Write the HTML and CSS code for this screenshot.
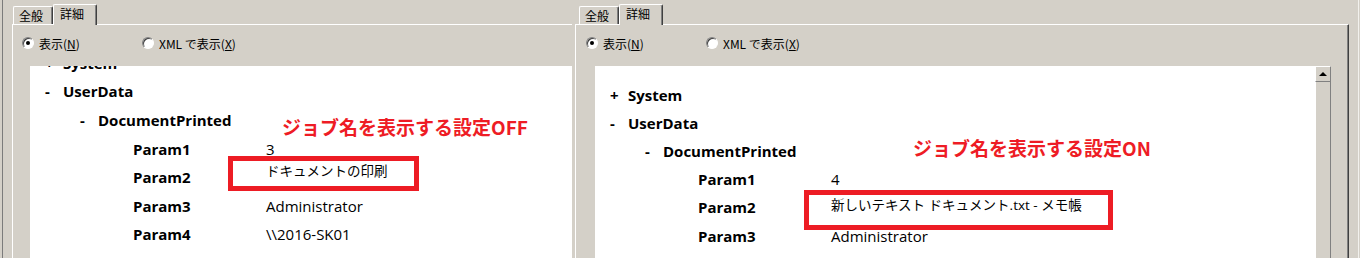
FILE: index.html
```html
<!DOCTYPE html>
<html lang="ja">
<head>
<meta charset="utf-8">
<title>イベントのプロパティ</title>
<link rel="stylesheet" href="styles.css">
</head>
<body>
<div class="screen">
  <section class="shot shot-left">
    <div class="frame">
      <div class="tabs">
        <div class="tab">全般</div>
        <div class="tab tab-active">詳細</div>
      </div>
      <div class="panel">
        <div class="radios">
          <div class="option"><span class="radio checked"></span><span>表示(<u>N</u>)</span></div>
          <div class="option"><span class="radio"></span><span>XML で表示(<u>X</u>)</span></div>
        </div>
        <div class="pane">
          <div class="tree tree-scrolled">
            <div class="row lv1"><span class="toggle">+</span><span class="name">System</span></div>
            <div class="row lv1"><span class="toggle">-</span><span class="name">UserData</span></div>
            <div class="row lv2"><span class="toggle">-</span><span class="name">DocumentPrinted</span></div>
            <div class="row lv3"><span class="name">Param1</span><span class="value">3</span></div>
            <div class="row lv3"><span class="name">Param2</span><span class="value ja ja-high">ドキュメントの印刷</span></div>
            <div class="row lv3"><span class="name">Param3</span><span class="value">Administrator</span></div>
            <div class="row lv3"><span class="name">Param4</span><span class="value">\\2016-SK01</span></div>
          </div>
        </div>
      </div>
    </div>
  </section>
  <section class="shot shot-right">
    <div class="frame">
      <div class="tabs">
        <div class="tab">全般</div>
        <div class="tab tab-active">詳細</div>
      </div>
      <div class="panel">
        <div class="radios">
          <div class="option"><span class="radio checked"></span><span>表示(<u>N</u>)</span></div>
          <div class="option"><span class="radio"></span><span>XML で表示(<u>X</u>)</span></div>
        </div>
        <div class="pane">
          <div class="tree-area">
            <div class="tree tree-top">
              <div class="row lv1"><span class="toggle">+</span><span class="name">System</span></div>
              <div class="row lv1"><span class="toggle">-</span><span class="name">UserData</span></div>
              <div class="row lv2"><span class="toggle">-</span><span class="name">DocumentPrinted</span></div>
              <div class="row lv3"><span class="name">Param1</span><span class="value">4</span></div>
              <div class="row lv3"><span class="name">Param2</span><span class="value ja">新しいテキスト ドキュメント.txt - メモ帳</span></div>
              <div class="row lv3"><span class="name">Param3</span><span class="value">Administrator</span></div>
            </div>
          </div>
          <div class="scrollbar">
            <div class="sb-btn"><span class="sb-arrow"></span></div>
            <div class="sb-thumb"></div>
          </div>
        </div>
      </div>
    </div>
    <div class="window-edge"></div>
  </section>

  <div class="note note-off">ジョブ名を表示する設定OFF</div>
  <div class="mark mark-off"></div>
  <div class="note note-on">ジョブ名を表示する設定ON</div>
  <div class="mark mark-on"></div>
</div>
</body>
</html>
```

FILE: styles.css
```css
html, body {
  margin: 0;
  padding: 0;
}
body {
  width: 1360px;
  height: 258px;
  overflow: hidden;
  background: #d4d0c8;
  font-family: "Noto Sans CJK JP", "Liberation Sans", sans-serif;
  color: #000;
}
.screen {
  position: relative;
  display: flex;
  height: 258px;
}
.shot {
  flex: none;
  height: 258px;
  display: flex;
  box-sizing: border-box;
  overflow: hidden;
}
.shot-left {
  width: 572px;
  padding-left: 2px;
}
.shot-left .frame {
  flex: 1;
  min-width: 0;
  border-left: 1px solid #7b7b7b;
  padding-left: 9px;
  display: flex;
  flex-direction: column;
}
.shot-right {
  width: 788px;
  padding-left: 3px;
  padding-right: 1px;
}
.shot-right .frame {
  flex: none;
  width: 774px;
  display: flex;
  flex-direction: column;
}
.window-edge {
  flex: none;
  width: 10px;
  box-sizing: border-box;
  border-right: 1px solid #f2f1ed;
}

/* tabs */
.tabs {
  flex: none;
  height: 24px;
  display: flex;
  align-items: flex-end;
  padding-left: 1px;
}
.shot-right .tabs {
  padding-left: 4px;
}
.tab {
  position: relative;
  height: 18px;
  width: 40px;
  box-sizing: border-box;
  border-top: 1px solid #fff;
  border-left: 1px solid #fff;
  border-right: 1px solid #404040;
  border-radius: 2px 2px 0 0;
  box-shadow: inset -1px 0 0 #808080;
  font-size: 12px;
  line-height: 17px;
  padding-left: 5px;
  white-space: nowrap;
}
.tab-active {
  z-index: 1;
  height: 21px;
  width: 44px;
  margin-bottom: -1px;
  background: #d4d0c8;
  padding-left: 6px;
  line-height: 18px;
}

/* panel */
.panel {
  flex: 1;
  min-height: 0;
  display: flex;
  flex-direction: column;
  border-top: 1px solid #fff;
  border-left: 1px solid #fff;
}
.shot-right .panel {
  border-right: 1px solid #404040;
  box-shadow: inset -1px 0 0 #808080;
}
.radios {
  flex: none;
  height: 41px;
  box-sizing: border-box;
  padding-bottom: 5px;
  display: flex;
  align-items: center;
  padding-left: 9px;
  font-size: 12px;
}
.shot-right .radios {
  padding-left: 10px;
}
.option {
  width: 120px;
  display: flex;
  align-items: center;
  gap: 5px;
  white-space: nowrap;
}
.option u {
  text-decoration-thickness: 1px;
  text-underline-offset: 1px;
}
.radio {
  position: relative;
  flex: none;
  width: 12px;
  height: 12px;
  box-sizing: border-box;
  border-radius: 50%;
  background: #fff;
  border: 1px solid;
  border-color: #808080 #ffffff #ffffff #808080;
  box-shadow: inset 1px 1px 0 #404040;
}
.radio.checked::after {
  content: "";
  position: absolute;
  left: 3px;
  top: 3px;
  width: 4px;
  height: 4px;
  border-radius: 50%;
  background: #000;
}

.pane {
  flex: 1;
  min-height: 0;
  background: #fff;
  margin-left: 17px;
  overflow: hidden;
}
.shot-right .pane {
  margin-left: 19px;
  margin-right: 17px;
  display: flex;
}
.tree-area {
  flex: 1;
  min-width: 0;
  overflow: hidden;
}

/* tree */
.tree {
  font-family: "Open Sans", "Liberation Sans", sans-serif;
  font-size: 15px;
}
.tree-scrolled {
  margin-top: -17.5px;
}
.tree-scrolled .row {
  height: 28.6px;
}
.tree-top {
  padding-top: 14.5px;
}
.tree-top .row {
  height: 28.2px;
}
.row {
  display: flex;
  align-items: center;
  white-space: nowrap;
}
.lv1 { padding-left: 15px; }
.lv2 { padding-left: 50px; }
.lv3 { padding-left: 103px; }
.toggle {
  width: 18px;
  flex: none;
  font-weight: 700;
}
.name {
  font-weight: 700;
}
.lv3 .name {
  width: 133px;
  flex: none;
}
.value {
  font-weight: 400;
}
.value.ja {
  font-family: "Open Sans", "Noto Sans CJK JP", sans-serif;
  font-size: 13.5px;
  margin-bottom: 7px;
}
.value.ja-high {
  margin-bottom: 15px;
}

/* scrollbar */
.scrollbar {
  flex: none;
  width: 16px;
  display: flex;
  flex-direction: column;
}
.sb-btn {
  flex: none;
  height: 16px;
  box-sizing: border-box;
  border-top: 1px solid #fff;
  border-left: 1px solid #fff;
  border-right: 1px solid #808080;
  border-bottom: 1px solid #808080;
  background: #d4d0c8;
  display: flex;
  align-items: center;
  justify-content: center;
}
.sb-arrow {
  width: 0;
  height: 0;
  border-left: 4px solid transparent;
  border-right: 4px solid transparent;
  border-bottom: 4px solid #000;
}
.sb-thumb {
  flex: 1;
  box-sizing: border-box;
  border-left: 1px solid #fff;
  border-right: 1px solid #808080;
  background: #d4d0c8;
}

/* annotations */
.note {
  position: absolute;
  color: #ee1c25;
  font-family: "Noto Sans CJK JP", sans-serif;
  font-weight: 700;
  font-size: 19px;
  line-height: 24px;
  white-space: nowrap;
}
.note-off { left: 282px; top: 115px; }
.note-on { left: 913px; top: 136px; }
.mark {
  position: absolute;
  box-sizing: border-box;
  border: 5px solid #ed1c24;
}
.mark-off { left: 228px; top: 156px; width: 191px; height: 35px; }
.mark-on { left: 804px; top: 190px; width: 309px; height: 40px; }
```
